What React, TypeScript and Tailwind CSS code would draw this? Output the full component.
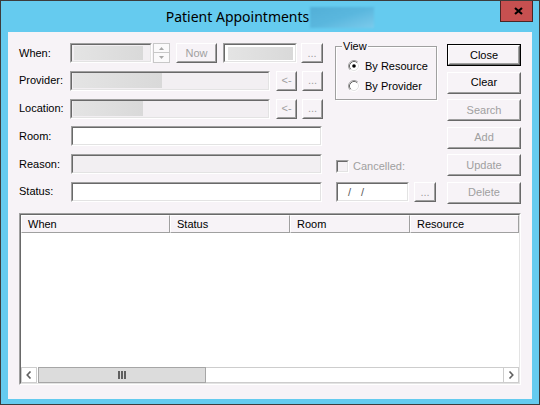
import React from "react";

function Sunken({
  className,
  inner,
  children,
}: {
  className: string;
  inner: string;
  children?: React.ReactNode;
}) {
  return (
    <div
      className={
        "shrink-0 border border-t-[#a0a0a0] border-l-[#a0a0a0] border-r-white border-b-white " +
        className
      }
    >
      <div
        className={
          "w-full h-full border border-t-[#696969] border-l-[#696969] border-r-[#e3e3e3] border-b-[#e3e3e3] " +
          inner
        }
      >
        {children}
      </div>
    </div>
  );
}

function Raised({
  label,
  disabled,
}: {
  label: string;
  disabled?: boolean;
}) {
  return (
    <div className="w-full h-full border border-t-white border-l-white border-r-[#696969] border-b-[#696969]">
      <div
        className={
          "w-full h-full border border-t-transparent border-l-transparent border-r-[#a0a0a0] border-b-[#a0a0a0] flex items-center justify-center leading-[13px] " +
          (disabled ? "text-[#a0a0a0]" : "text-black")
        }
      >
        {label}
      </div>
    </div>
  );
}

function Btn({
  className,
  label,
  disabled,
  isDefault,
}: {
  className: string;
  label: string;
  disabled?: boolean;
  isDefault?: boolean;
}) {
  if (isDefault) {
    return (
      <div className={"shrink-0 border border-[#000000] " + className}>
        <Raised label={label} disabled={disabled} />
      </div>
    );
  }
  return (
    <div className={"shrink-0 " + className}>
      <Raised label={label} disabled={disabled} />
    </div>
  );
}

function Radio({ checked }: { checked?: boolean }) {
  return (
    <svg width="12" height="12" viewBox="0 0 12 12" className="shrink-0">
      <circle cx="6" cy="6" r="5" fill="#ffffff" />
      <path d="M2.11 9.89 A5.5 5.5 0 0 1 9.89 2.11" fill="none" stroke="#a0a0a0" strokeWidth="1" />
      <path d="M9.89 2.11 A5.5 5.5 0 0 1 2.11 9.89" fill="none" stroke="#ffffff" strokeWidth="1" />
      <path d="M2.82 9.18 A4.5 4.5 0 0 1 9.18 2.82" fill="none" stroke="#696969" strokeWidth="1" />
      <path d="M9.18 2.82 A4.5 4.5 0 0 1 2.82 9.18" fill="none" stroke="#e3e3e3" strokeWidth="1" />
      {checked ? <circle cx="6" cy="6" r="1.8" fill="#000000" /> : null}
    </svg>
  );
}

function HeaderCell({ className, label }: { className: string; label: string }) {
  return (
    <div
      className={
        "h-full border-t border-t-white border-l border-l-white border-r border-r-[#a0a0a0] border-b border-b-[#a0a0a0] pl-[6px] flex items-center leading-[13px] " +
        className
      }
    >
      {label}
    </div>
  );
}

function Blur({ className }: { className: string }) {
  return (
    <div
      className={
        "bg-linear-to-r from-[#e4e4e4] to-[#d9d9d9] blur-[0.6px] " + className
      }
    />
  );
}

export default function App() {
  return (
    <div className="w-[540px] h-[405px] bg-[#65cbef] border border-[#3c3c3c] flex flex-col relative font-['Liberation_Sans',Arial,sans-serif] text-[11px] leading-[13px] text-black select-none">
      {/* Title bar */}
      <div className="h-[31px] shrink-0 flex items-center justify-center">
        <span className="font-['Noto_Sans',sans-serif] text-[14px] leading-[20px] text-black">
          Patient Appointments
        </span>
        <span className="ml-[1px] mt-[1px] w-[64px] h-[21px] bg-linear-to-br from-[#52afd7] via-[#5ab7de] to-[#7ccbec] blur-[0.8px]" />
      </div>
      <div className="absolute top-0 right-[6px] w-[33px] h-[21px] bg-[#c75050] border border-[#4a2626] border-t-0 flex items-center justify-center">
        <svg width="9" height="8" viewBox="0 0 9 8" className="ml-[3px]">
          <path d="M1 1 L8 7 M8 1 L1 7" stroke="#000000" strokeWidth="2.2" />
        </svg>
      </div>

      {/* Client area */}
      <div className="mx-[7px] h-[367px] shrink-0 bg-[#f7f3f7] pt-[11px] pl-[11px] flex flex-col">
        <div className="flex h-[170px] shrink-0">
          {/* Left form */}
          <div className="w-[304px] flex flex-col gap-[7.8px]">
            <div className="h-[20px] flex items-center">
              <span className="w-[51px] shrink-0">When:</span>
              <Sunken className="w-[82px] h-[20px]" inner="bg-[#f2eff2] flex items-center pl-[2px]">
                <Blur className="w-[69px] h-[14px]" />
              </Sunken>
              <div className="ml-[1px] w-[17px] h-[20px] shrink-0 flex flex-col">
                <div className="h-[10px] border border-[#c8c8c8] bg-[#fbfafb] flex items-center justify-center">
                  <svg width="5" height="3" viewBox="0 0 5 3">
                    <path d="M0 3 L2.5 0 L5 3 Z" fill="#a8a8a8" />
                  </svg>
                </div>
                <div className="h-[10px] border border-t-0 border-[#c8c8c8] bg-[#fbfafb] flex items-center justify-center">
                  <svg width="5" height="3" viewBox="0 0 5 3">
                    <path d="M0 0 L2.5 3 L5 0 Z" fill="#a8a8a8" />
                  </svg>
                </div>
              </div>
              <Btn className="ml-[6px] w-[41px] h-[20px]" label="Now" disabled />
              <Sunken className="ml-[6px] w-[74px] h-[20px]" inner="bg-white flex items-center pl-[3px]">
                <Blur className="w-[65px] h-[13px]" />
              </Sunken>
              <Btn className="ml-[4px] w-[22px] h-[20px]" label="..." disabled />
            </div>

            <div className="h-[20px] flex items-center">
              <span className="w-[51px] shrink-0">Provider:</span>
              <Sunken className="w-[200px] h-[20px]" inner="bg-[#f2eff2] flex items-center pl-[1px]">
                <Blur className="w-[89px] h-[15px]" />
              </Sunken>
              <Btn className="ml-[6px] w-[21px] h-[20px]" label="<-" disabled />
              <Btn className="ml-[5px] w-[21px] h-[20px]" label="..." disabled />
            </div>

            <div className="h-[20px] flex items-center">
              <span className="w-[51px] shrink-0">Location:</span>
              <Sunken className="w-[200px] h-[20px]" inner="bg-[#f2eff2] flex items-center pl-[1px]">
                <Blur className="w-[70px] h-[15px]" />
              </Sunken>
              <Btn className="ml-[6px] w-[21px] h-[20px]" label="<-" disabled />
              <Btn className="ml-[5px] w-[21px] h-[20px]" label="..." disabled />
            </div>

            <div className="h-[20px] flex items-center">
              <span className="w-[52px] shrink-0">Room:</span>
              <Sunken className="w-[251px] h-[20px]" inner="bg-white" />
            </div>

            <div className="h-[20px] flex items-center">
              <span className="w-[52px] shrink-0">Reason:</span>
              <Sunken className="w-[251px] h-[20px]" inner="bg-[#f2eff2]" />
            </div>

            <div className="h-[20px] flex items-center">
              <span className="w-[52px] shrink-0">Status:</span>
              <Sunken className="w-[251px] h-[20px]" inner="bg-white" />
            </div>
          </div>

          {/* Middle column */}
          <div className="ml-[12px] w-[102px] flex flex-col">
            <div className="relative mt-[3px] h-[54px] border border-[#a0a0a0] shadow-[inset_1px_1px_0_#ffffff,1px_1px_0_#ffffff] pt-[9px] pl-[12px]">
              <span className="absolute -top-[7px] left-[6px] px-[1px] bg-[#f7f3f7] leading-[13px]">
                View
              </span>
              <div className="h-[20px] flex items-center gap-[5px]">
                <Radio checked />
                <span>By Resource</span>
              </div>
              <div className="h-[20px] flex items-center gap-[5px]">
                <Radio />
                <span>By Provider</span>
              </div>
            </div>
            <div className="mt-[60px] ml-[1px] h-[13px] flex items-center gap-[4px]">
              <Sunken className="w-[13px] h-[13px]" inner="bg-[#f4f1f4]" />
              <span className="text-[#a0a0a0]">Cancelled:</span>
            </div>
            <div className="mt-[9px] ml-[1px] flex">
              <Sunken className="w-[73px] h-[20px]" inner="bg-white flex items-center pl-[10px] gap-[10px] text-[#5a5a5a]">
                <span>/</span>
                <span>/</span>
              </Sunken>
              <Btn className="ml-[5px] w-[22px] h-[20px]" label="..." disabled />
            </div>
          </div>

          {/* Right buttons */}
          <div className="ml-[10px] w-[74px] pt-[1px] flex flex-col gap-[5.6px]">
            <Btn className="w-[74px] h-[22px]" label="Close" isDefault />
            <Btn className="w-[74px] h-[22px]" label="Clear" />
            <Btn className="w-[74px] h-[22px]" label="Search" disabled />
            <Btn className="w-[74px] h-[22px]" label="Add" disabled />
            <Btn className="w-[74px] h-[22px]" label="Update" disabled />
            <Btn className="w-[74px] h-[22px]" label="Delete" disabled />
          </div>
        </div>

        {/* List view */}
        <Sunken className="w-[502px] h-[172px]" inner="bg-white flex flex-col">
          <div className="h-[18px] shrink-0 flex bg-[#f7f3f7]">
            <HeaderCell className="w-[149px] shrink-0" label="When" />
            <HeaderCell className="w-[120px] shrink-0" label="Status" />
            <HeaderCell className="w-[120px] shrink-0" label="Room" />
            <HeaderCell className="flex-1" label="Resource" />
          </div>
          <div className="flex-1" />
          <div className="h-[16px] shrink-0 flex bg-white">
            <div className="w-[16px] h-full shrink-0 border border-[#cdcdcd] flex items-center justify-center">
              <svg width="6" height="8" viewBox="0 0 6 8">
                <path d="M4.5 0.5 L1.2 4 L4.5 7.5" fill="none" stroke="#606060" strokeWidth="1.6" />
              </svg>
            </div>
            <div className="ml-[1px] w-[168px] h-full shrink-0 bg-[#dcdcdc] border border-[#a6a6a6] flex items-center justify-center gap-[1px]">
              <div className="w-[2px] h-[8px] bg-[#606060]" />
              <div className="w-[2px] h-[8px] bg-[#606060]" />
              <div className="w-[2px] h-[8px] bg-[#606060]" />
            </div>
            <div className="flex-1 h-full border-y border-[#cdcdcd]" />
            <div className="w-[16px] h-full shrink-0 border border-[#cdcdcd] flex items-center justify-center">
              <svg width="6" height="8" viewBox="0 0 6 8">
                <path d="M1.5 0.5 L4.8 4 L1.5 7.5" fill="none" stroke="#606060" strokeWidth="1.6" />
              </svg>
            </div>
          </div>
        </Sunken>
      </div>
    </div>
  );
}
